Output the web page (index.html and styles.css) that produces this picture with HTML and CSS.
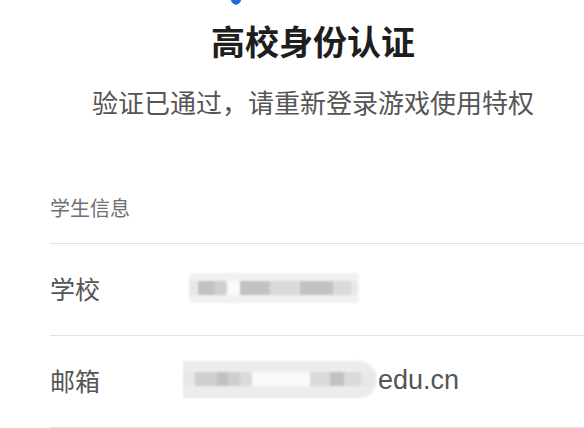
FILE: index.html
```html
<html lang="zh-CN">

<head>
    <meta charset="UTF-8">
    <meta name="viewport" content="width=device-width, initial-scale=1.0">
    <title>高校身份认证</title>

    <link rel="stylesheet" href="styles.css">
</head>

<body>
    <div id="page-wrapper">
        <header class="head">
            <svg class="head-icon" width="14" height="6" viewBox="0 0 14 6">
                <path d="M2 -4 L12 -4 L12 0 Q12 3 7 5 Q2 3 2 0 Z" fill="#1a6fe0" />
            </svg>
            <h1 class="title">高校身份认证</h1>
            <p class="subtitle">验证已通过，请重新登录游戏使用特权</p>
        </header>

        <section class="info">
            <div class="info-label">学生信息</div>
            <ul class="info-list">
                <li class="info-row">
                    <span class="row-key">学校</span>
                    <span class="row-value">
                        <span class="mosaic mosaic-school">
                            <span class="cell c4" style="width:9px"></span>
                            <span class="cell c1" style="width:16px"></span>
                            <span class="cell c2" style="width:13px"></span>
                            <span class="cell c5" style="width:13px"></span>
                            <span class="cell c1" style="width:30px"></span>
                            <span class="cell c3" style="width:30px"></span>
                            <span class="cell c1" style="width:33px"></span>
                            <span class="cell c3" style="width:18px"></span>
                            <span class="cell c4" style="width:7px"></span>
                        </span>
                    </span>
                </li>
                <li class="info-row">
                    <span class="row-key">邮箱</span>
                    <span class="row-value">
                        <span class="mosaic mosaic-mail">
                            <span class="cell c4" style="width:12px"></span>
                            <span class="cell c2" style="width:22px"></span>
                            <span class="cell c1" style="width:11px"></span>
                            <span class="cell c2" style="width:12px"></span>
                            <span class="cell c3" style="width:12px"></span>
                            <span class="cell c5" style="width:58px"></span>
                            <span class="cell c3" style="width:20px"></span>
                            <span class="cell c1" style="width:14px"></span>
                            <span class="cell c3" style="width:17px"></span>
                            <span class="cell c4" style="width:15px"></span>
                        </span>
                        <span class="mail-domain">edu.cn</span>
                    </span>
                </li>
            </ul>
        </section>
    </div>
</body>

</html>
```

FILE: styles.css
```css
html {
    font-family: "Liberation Sans", "Noto Sans CJK SC", sans-serif;
    background: #fff;
}

body {
    margin: 0;
    overflow: hidden;
}

#page-wrapper {
    width: 584px;
    height: 428px;
    overflow: hidden;
}

/* top block, centred on the full (uncropped) page */
.head {
    margin-left: 42px;
    text-align: center;
}

.head-icon {
    display: block;
    margin: 0 auto;
    transform: translateX(-77px);
}

.title {
    margin: 17px 0 0;
    font-size: 34px;
    line-height: 40px;
    font-weight: bold;
    color: #1e1e1e;
}

.subtitle {
    margin: 23px 0 0;
    font-size: 26px;
    line-height: 36px;
    color: #555;
}

.info {
    margin-top: 73px;
    padding-left: 50px;
}

.info-label {
    font-size: 20px;
    line-height: 28px;
    color: #6f6f6f;
    padding-bottom: 20px;
    border-bottom: 1px solid #e2e2e2;
}

.info-list {
    list-style: none;
    margin: 0;
    padding: 0;
}

.info-row {
    display: flex;
    align-items: center;
    box-sizing: border-box;
    height: 92px;
    padding-bottom: 4px;
    border-bottom: 1px solid #e2e2e2;
}

.row-key {
    width: 133px;
    font-size: 25px;
    color: #555;
}

.row-value {
    display: flex;
    align-items: center;
    font-size: 25px;
    color: #555;
}

/* pixelated blur over private data */
.mosaic {
    display: flex;
    padding: 8px 0;
    background: #f1f1f1;
    filter: blur(1.2px);
}

.mosaic-school {
    margin-left: 6px;
}

.mosaic-mail {
    padding: 11px 0 12px;
    margin-right: 2px;
    background: #ececec;
    border-radius: 0 16px 16px 0;
}

.cell {
    display: block;
    height: 14px;
}

.c1 { background: #c2c2c2; }
.c2 { background: #cfcfcf; }
.c3 { background: #dadada; }
.c4 { background: #e8e8e8; }
.c5 { background: #fafafa; }

.mail-domain {
    font-size: 27px;
    line-height: 30px;
}
```
